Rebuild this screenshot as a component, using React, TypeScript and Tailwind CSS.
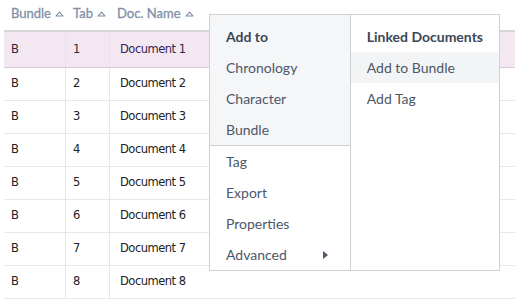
import { ReactNode } from "react";

const rows = [1, 2, 3, 4, 5, 6, 7, 8];

const SortCaret = () => (
  <svg width="9" height="6" viewBox="0 0 9 6" className="ml-[4px] shrink-0">
    <path d="M1 5 L4.5 1.2 L8 5 Z" fill="none" stroke="#7d8ba0" strokeWidth="1.1" strokeLinejoin="round" />
  </svg>
);

const Item = ({ children, bold, hover }: { children: ReactNode; bold?: boolean; hover?: boolean }) => (
  <div
    className={`h-[31px] leading-[31px] px-4 text-[14px] whitespace-nowrap ${bold ? "font-bold text-[#3c4656]" : "text-[#4d5767]"} ${hover ? "bg-[#f3f4f6]" : ""}`}
  >
    {children}
  </div>
);

export default function App() {
  return (
    <div className="relative w-[515px] h-[300px] overflow-hidden bg-white">
      <div className="pl-[4px]">
        <div className="flex h-[32px] border-b-2 border-[#d3d6da] pb-[2px] text-[13px] text-[#7f90a8] [-webkit-text-stroke:0.3px_#7f90a8] font-['Lato',sans-serif]">
          <div className="w-[62px] pl-[7px] flex items-center">Bundle<SortCaret /></div>
          <div className="w-[44px] pl-[7px] flex items-center">Tab<SortCaret /></div>
          <div className="flex-1 pl-[7px] flex items-center">Doc. Name<SortCaret /></div>
        </div>
        {rows.map((n) => (
          <div
            key={n}
            className={`flex text-[11.5px] font-['DejaVu_Sans',sans-serif] tracking-[-0.5px] ${n === 1 ? "h-[36px] bg-[#f3e8f2] border-b border-[#ddc6dd] text-[#2a2a33]" : "h-[33px] border-b border-[#e7e8ea] text-[#222]"}`}
          >
            <div className="w-[62px] pl-[7px] flex items-center border-r border-[#e4e6e9]">B</div>
            <div className="w-[44px] pl-[7px] flex items-center border-r border-[#e4e6e9]">{n}</div>
            <div className={`flex-1 pl-[10px] flex items-center ${n === 1 ? "text-[#3b2352]" : ""}`}>Document {n}</div>
          </div>
        ))}
      </div>

      <div className="absolute left-[209px] top-[14px] w-[291px] h-[257px] flex border border-[#cdd0d4] bg-white font-['Lato',sans-serif]">
        <div className="w-[142px] flex flex-col border-r border-[#cdd0d4]">
          <div className="bg-[#f5f6f8] pt-[6px] border-b border-[#cdd0d4]">
            <Item bold>Add to</Item>
            <Item>Chronology</Item>
            <Item>Character</Item>
            <Item>Bundle</Item>
          </div>
          <Item>Tag</Item>
          <Item>Export</Item>
          <Item>Properties</Item>
          <div className="h-[31px] leading-[31px] pl-4 pr-[22px] text-[14px] text-[#4d5767] flex items-center justify-between">
            <span>Advanced</span>
            <svg width="5" height="8" viewBox="0 0 5 8">
              <path d="M0 0 L5 4 L0 8 Z" fill="#4d5767" />
            </svg>
          </div>
        </div>
        <div className="flex-1 pt-[6px]">
          <Item bold>Linked Documents</Item>
          <Item hover>Add to Bundle</Item>
          <Item>Add Tag</Item>
        </div>
      </div>
    </div>
  );
}
